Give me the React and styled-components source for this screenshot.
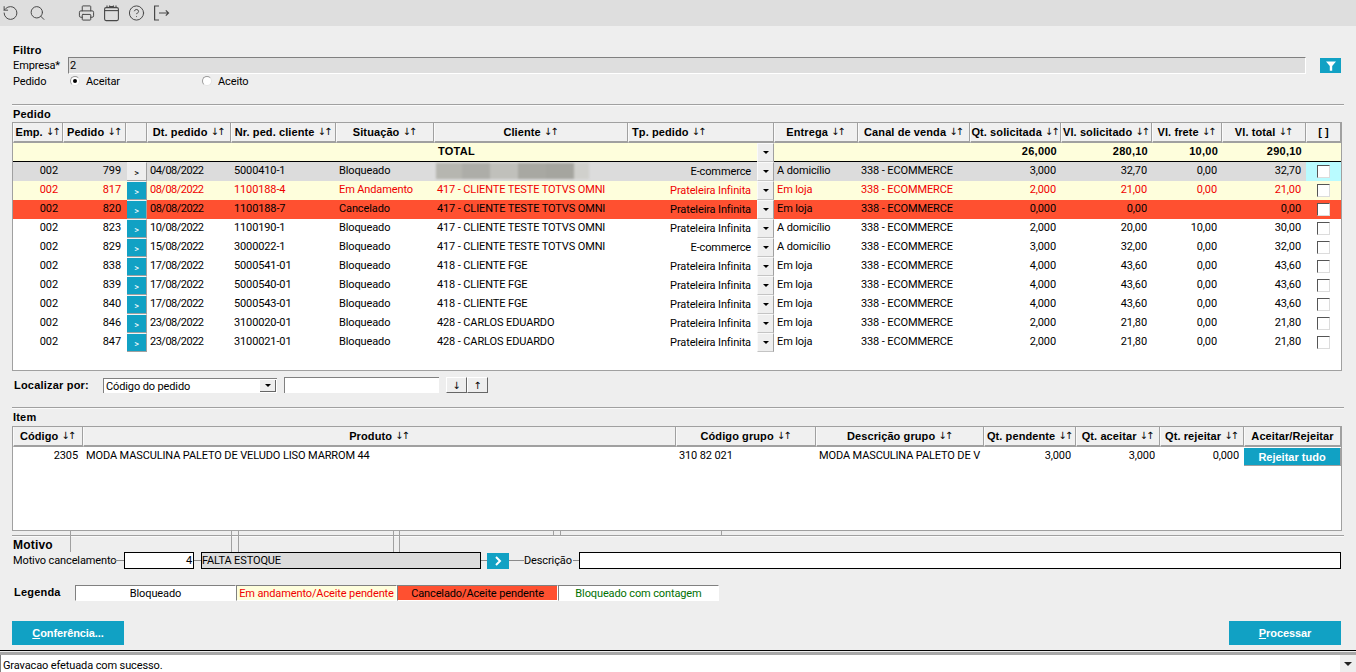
import React from "react";
import styled, { createGlobalStyle } from "styled-components";
import { RotateCcw, Search, Printer, CircleHelp } from "lucide-react";

const teal = "#11a1c4";
const line = "#a0a0a0";
const boldFont = `"Liberation Sans", Arial, sans-serif`;

const Global = createGlobalStyle`
  html, body {
    margin: 0;
    padding: 0;
    background: #eeeeee;
    overflow: hidden;
  }
  body {
    font-family: Roboto, "Liberation Sans", Arial, sans-serif;
    font-size: 11px;
    letter-spacing: -0.12px;
    color: #000;
  }
`;

const Page = styled.div`
  width: 1356px;
  height: 672px;
  display: flex;
  flex-direction: column;
  overflow: hidden;
`;

const Toolbar = styled.div`
  height: 26px;
  flex: none;
  background: #dedede;
  display: flex;
  align-items: center;
  padding-left: 2px;
  padding-bottom: 1px;
  box-sizing: border-box;
  color: #484848;
`;

const ToolIcon = styled.span`
  width: 17px;
  height: 17px;
  margin-right: ${(p) => p.$gap}px;
  display: flex;
  align-items: center;
  justify-content: center;
`;

const Main = styled.div`
  flex: none;
  width: 1332px;
  margin-left: 12px;
  display: flex;
  flex-direction: column;
`;

const Title = styled.div`
  height: ${(p) => p.$h}px;
  margin-top: ${(p) => p.$top || 0}px;
  padding: 0 0 ${(p) => p.$lift || 0}px 1px;
  box-sizing: border-box;
  display: flex;
  align-items: center;
  font-family: ${boldFont};
  font-weight: 700;
  font-size: ${(p) => p.$size || 11}px;
  letter-spacing: 0.2px;
`;

const FilterRow = styled.div`
  height: 17px;
  display: flex;
  align-items: center;
  padding-left: 1px;
`;

const FieldName = styled.span`
  width: 55px;
  flex: none;
`;

const ReadInput = styled.div`
  width: 1238px;
  height: 17px;
  box-sizing: border-box;
  background: #dedede;
  border-top: 1px solid #808080;
  border-left: 1px solid #808080;
  border-right: 1px solid #fff;
  border-bottom: 1px solid #fff;
  padding-left: 1px;
  line-height: 16px;
`;

const FilterButton = styled.div`
  width: 21px;
  height: 15px;
  margin-left: 14px;
  background: ${teal};
  display: flex;
  align-items: center;
  justify-content: center;
`;

const RadioRow = styled.div`
  height: 14px;
  display: flex;
  align-items: center;
  padding-left: 1px;
`;

const RadioName = styled(FieldName)`
  width: 57px;
`;

const RadioDot = styled.span`
  width: 10px;
  height: 10px;
  flex: none;
  box-sizing: border-box;
  border-radius: 50%;
  background: #fff;
  border: 1px solid #9a9a9a;
  border-bottom-color: #e4e4e4;
  border-right-color: #e4e4e4;
  display: flex;
  align-items: center;
  justify-content: center;
  &::after {
    content: "";
    width: 4px;
    height: 4px;
    border-radius: 50%;
    background: ${(p) => (p.$on ? "#000" : "transparent")};
  }
`;

const RadioLabel = styled.span`
  width: ${(p) => p.$w}px;
  margin-left: 6px;
`;

const Divider = styled.div`
  position: relative;
  height: 1px;
  margin-top: ${(p) => p.$top}px;
  background: ${line};
  border-bottom: 1px solid #fafafa;
`;

const Tick = styled.span`
  position: absolute;
  left: ${(p) => p.$x}px;
  top: -4px;
  width: 1px;
  height: ${(p) => (p.$tall ? 21 : 5)}px;
  background: ${line};
`;

const Table = styled.div`
  width: 1330px;
  height: ${(p) => p.$h}px;
  box-sizing: border-box;
  background: #fff;
  border: 1px solid ${line};
  overflow: hidden;
`;

const Row = styled.div`
  display: grid;
  grid-template-columns: ${(p) => p.$cols};
  height: ${(p) => p.$h || 19}px;
  background: ${(p) => p.$bg || "transparent"};
  color: ${(p) => p.$color || "#000"};
`;

const Head = styled.div`
  grid-column: span ${(p) => p.$span || 1};
  box-sizing: border-box;
  background: #f0f0f0;
  border-left: 1px solid #fafafa;
  border-right: 1px solid ${line};
  border-bottom: 2px solid ${line};
  display: flex;
  align-items: center;
  justify-content: ${(p) => (p.$span ? "flex-start" : "center")};
  font-family: ${boldFont};
  font-weight: 700;
  letter-spacing: 0.1px;
  padding: 0 0 1px ${(p) => (p.$span ? 3 : 0)}px;
  white-space: nowrap;
  overflow: hidden;
`;

const Cell = styled.div`
  box-sizing: border-box;
  padding: 0 5px 3px 3px;
  display: flex;
  align-items: center;
  justify-content: ${(p) => (p.$right ? "flex-end" : "flex-start")};
  white-space: nowrap;
  overflow: hidden;
  background: ${(p) => p.$bg || "transparent"};
`;

const DateCell = styled(Cell)`
  letter-spacing: -0.5px;
`;

const TotalCell = styled(Cell)`
  padding: 0 4px 2px 4px;
  font-family: ${boldFont};
  font-weight: 700;
  letter-spacing: 0.25px;
  border-bottom: 1px solid #000;
`;

const TypeCell = styled(Cell)`
  padding: 0 6px 1px 0;
`;

const RowButton = styled.div`
  box-sizing: border-box;
  margin-left: 1px;
  background: ${(p) => (p.$plain ? "#eeeeee" : teal)};
  color: ${(p) => (p.$plain ? "#000" : "#fff")};
  border-top: 1px solid #f4f4f4;
  border-right: 1px solid ${line};
  border-bottom: 1px solid ${line};
  display: flex;
  align-items: center;
  justify-content: center;
  font-size: 9px;
  padding-top: 3px;
`;

const ComboArrow = styled.div`
  box-sizing: border-box;
  background: #eeeeee;
  border-top: 1px solid #fafafa;
  border-left: 1px solid #fafafa;
  border-right: 1px solid ${line};
  border-bottom: 1px solid #c4c4c4;
  display: flex;
  align-items: center;
  justify-content: center;
  &::after {
    content: "";
    border-left: 3px solid transparent;
    border-right: 3px solid transparent;
    border-top: 3px solid #000;
  }
`;

const CheckCell = styled.div`
  display: flex;
  align-items: center;
  justify-content: center;
  background: ${(p) => p.$bg || "transparent"};
`;

const CheckBox = styled.span`
  width: 13px;
  height: 13px;
  box-sizing: border-box;
  background: #fff;
  border-top: 1px solid #555;
  border-left: 1px solid #555;
  border-right: 1px solid #dcdcdc;
  border-bottom: 1px solid #dcdcdc;
`;

const Redacted = styled.div`
  display: flex;
  height: 16px;
  margin: 2px 0 0 -1px;
  filter: blur(1px);
`;

const RedactedBit = styled.span`
  width: ${(p) => p.$w}px;
  background: ${(p) => p.$bg};
`;

const FindRow = styled.div`
  height: 16px;
  margin-top: 6px;
  display: flex;
  align-items: center;
`;

const FindLabel = styled.span`
  width: 91px;
  padding-left: 2px;
  box-sizing: border-box;
  font-family: ${boldFont};
  font-weight: 700;
  letter-spacing: 0.2px;
`;

const Combo = styled.div`
  width: 174px;
  height: 15px;
  margin-top: 1px;
  box-sizing: border-box;
  background: #fff;
  border-top: 1px solid #808080;
  border-left: 1px solid #808080;
  display: flex;
  align-items: center;
  justify-content: space-between;
  padding-left: 2px;
`;

const ComboButton = styled.span`
  width: 16px;
  height: 12px;
  margin-right: 1px;
  box-sizing: border-box;
  background: #eeeeee;
  border-right: 1px solid #666;
  border-bottom: 1px solid #666;
  display: flex;
  align-items: center;
  justify-content: center;
  &::after {
    content: "";
    border-left: 3px solid transparent;
    border-right: 3px solid transparent;
    border-top: 3px solid #000;
  }
`;

const FindInput = styled.div`
  width: 155px;
  height: 16px;
  margin-left: 7px;
  box-sizing: border-box;
  background: #fff;
  border-top: 1px solid #808080;
  border-left: 1px solid #808080;
`;

const FindButton = styled.div`
  width: 21px;
  height: 16px;
  box-sizing: border-box;
  margin-left: ${(p) => p.$left}px;
  background: #eeeeee;
  border-top: 1px solid #fff;
  border-left: 1px solid #fff;
  border-right: 1px solid #666;
  border-bottom: 1px solid #666;
  display: flex;
  align-items: center;
  justify-content: center;
  font-family: "DejaVu Sans", sans-serif;
  font-size: 10px;
`;

const RejectButton = styled.div`
  box-sizing: border-box;
  height: 18px;
  margin-top: 1px;
  background: ${teal};
  color: #fff;
  border-right: 1px solid ${line};
  border-bottom: 1px solid ${line};
  display: flex;
  align-items: center;
  justify-content: center;
  font-family: ${boldFont};
  font-weight: 700;
  letter-spacing: 0;
`;

const ReasonRow = styled.div`
  height: 17px;
  display: flex;
  align-items: center;
  padding-left: 1px;
`;

const ReasonLabel = styled.span`
  width: ${(p) => p.$w}px;
  flex: none;
  white-space: nowrap;
`;

const Joint = styled.span`
  width: ${(p) => p.$w}px;
  height: 1px;
  flex: none;
  background: #8a8a8a;
`;

const BoxInput = styled.div`
  width: ${(p) => p.$w}px;
  height: 17px;
  flex: none;
  box-sizing: border-box;
  border: 1px solid #000;
  background: ${(p) => (p.$gray ? "#dcdcdc" : "#fff")};
  text-align: ${(p) => (p.$right ? "right" : "left")};
  padding: 0 1px 0 0;
  line-height: 16px;
`;

const ArrowButton = styled.div`
  width: 22px;
  height: 16px;
  flex: none;
  background: ${teal};
  display: flex;
  align-items: center;
  justify-content: center;
`;

const LegendRow = styled.div`
  height: 16px;
  margin-top: 16px;
  display: flex;
  align-items: center;
`;

const LegendLabel = styled.span`
  width: 63px;
  padding: 0 0 2px 2px;
  box-sizing: border-box;
  font-family: ${boldFont};
  font-weight: 700;
  letter-spacing: 0.2px;
`;

const LegendCell = styled.div`
  width: 161px;
  height: 16px;
  box-sizing: border-box;
  background: ${(p) => p.$bg};
  color: ${(p) => p.$color};
  border-top: 1px solid #808080;
  border-left: 1px solid #808080;
  border-right: 1px solid #fff;
  border-bottom: 1px solid #fff;
  display: flex;
  align-items: center;
  justify-content: center;
`;

const ActionRow = styled.div`
  width: 1329px;
  height: 24px;
  margin-top: 20px;
  display: flex;
  justify-content: space-between;
`;

const ActionButton = styled.div`
  width: 112px;
  height: 24px;
  background: ${teal};
  color: #fff;
  display: flex;
  align-items: center;
  justify-content: center;
  font-family: ${boldFont};
  font-weight: 700;
  letter-spacing: -0.1px;
  u {
    text-underline-offset: 1px;
  }
`;

const StatusBar = styled.div`
  margin-top: 5px;
  flex: 1;
  background: #fff;
  border-top: 1px solid #000;
  display: flex;
  flex-direction: column;
`;

const StatusEdge = styled.div`
  height: 4px;
  flex: none;
  background: #a8a8a8;
  border-top: 1px solid #eeeeee;
  box-sizing: border-box;
`;

const StatusBody = styled.div`
  flex: 1;
  display: flex;
  align-items: center;
  justify-content: space-between;
  border-left: 1px solid #808080;
  padding-left: 2px;
`;

const StatusText = styled.span`
  padding-top: 3px;
`;

const StatusArrow = styled.div`
  width: 16px;
  align-self: stretch;
  background: #eeeeee;
  display: flex;
  align-items: center;
  justify-content: center;
  &::after {
    content: "";
    border-left: 4px solid transparent;
    border-right: 4px solid transparent;
    border-top: 4px solid #222;
  }
`;

const Sort = styled.span`
  font-family: "DejaVu Sans", sans-serif;
  font-weight: 400;
  font-size: 10px;
  letter-spacing: -2px;
  margin-left: 3px;
  margin-right: 2px;
`;

const CalendarIcon = () => (
  <svg width="17" height="18" viewBox="0 0 17 18" fill="none" stroke="currentColor" strokeWidth="1.1">
    <rect x="1.6" y="3.6" width="13.8" height="13" rx="1.5" />
    <path d="M1.6 6.6h13.8" />
    <path d="M4 1.5v2.5M13 1.5v2.5M6 2.6h5M6 2.6l1-1M11 2.6l-1-1" />
  </svg>
);

const ExitIcon = () => (
  <svg width="17" height="18" viewBox="0 0 17 18" fill="none" stroke="currentColor" strokeWidth="1.2">
    <path d="M6 2H1.6v14H6" />
    <path d="M6 9h9.5M12.8 6.4L15.5 9l-2.7 2.6" />
  </svg>
);

const FunnelIcon = () => (
  <svg width="10" height="10" viewBox="0 0 10 10" fill="#fff">
    <path d="M0 0.5h10L6.2 5v4.8H3.8V5z" />
  </svg>
);

const ChevronIcon = () => (
  <svg width="8" height="10" viewBox="0 0 8 10" fill="none" stroke="#fff" strokeWidth="2">
    <path d="M2 1l4 4-4 4" />
  </svg>
);

const orderCols = "50px 63px 21px 84px 105px 98px 194px 129px 17px 84px 112px 91px 91px 70px 84px 35px";
const itemCols = "70px 593px 140px 168px 92px 84px 84px 97px";

const RED = { bg: "#fefedc", color: "#f00000" };
const ORANGE = { bg: "#ff5030", color: "#000" };
const GRAY = { bg: "#dcdcdc", color: "#000" };

const omni = "417 - CLIENTE TESTE TOTVS OMNI";
const fge = "418 - CLIENTE FGE";
const carlos = "428 - CARLOS EDUARDO";
const shelf = "Prateleira Infinita";

const orders = [
  { n: "799", d: "04/08/2022", c: "5000410-1", s: "Bloqueado", cl: null, t: "E-commerce", e: "A domicílio", q: "3,000", v: "32,70", f: "0,00", tot: "32,70", ...GRAY, plain: true, check: "#b9fbff" },
  { n: "817", d: "08/08/2022", c: "1100188-4", s: "Em Andamento", cl: omni, t: shelf, e: "Em loja", q: "2,000", v: "21,00", f: "0,00", tot: "21,00", ...RED },
  { n: "820", d: "08/08/2022", c: "1100188-7", s: "Cancelado", cl: omni, t: shelf, e: "Em loja", q: "0,000", v: "0,00", f: "", tot: "0,00", ...ORANGE },
  { n: "823", d: "10/08/2022", c: "1100190-1", s: "Bloqueado", cl: omni, t: shelf, e: "A domicílio", q: "2,000", v: "20,00", f: "10,00", tot: "30,00" },
  { n: "829", d: "15/08/2022", c: "3000022-1", s: "Bloqueado", cl: omni, t: "E-commerce", e: "A domicílio", q: "3,000", v: "32,00", f: "0,00", tot: "32,00" },
  { n: "838", d: "17/08/2022", c: "5000541-01", s: "Bloqueado", cl: fge, t: shelf, e: "Em loja", q: "4,000", v: "43,60", f: "0,00", tot: "43,60" },
  { n: "839", d: "17/08/2022", c: "5000540-01", s: "Bloqueado", cl: fge, t: shelf, e: "Em loja", q: "4,000", v: "43,60", f: "0,00", tot: "43,60" },
  { n: "840", d: "17/08/2022", c: "5000543-01", s: "Bloqueado", cl: fge, t: shelf, e: "Em loja", q: "4,000", v: "43,60", f: "0,00", tot: "43,60" },
  { n: "846", d: "23/08/2022", c: "3100020-01", s: "Bloqueado", cl: carlos, t: shelf, e: "Em loja", q: "2,000", v: "21,80", f: "0,00", tot: "21,80" },
  { n: "847", d: "23/08/2022", c: "3100021-01", s: "Bloqueado", cl: carlos, t: shelf, e: "Em loja", q: "2,000", v: "21,80", f: "0,00", tot: "21,80" },
];

const blurBits = [
  [26, "#b6b6b0"],
  [28, "#adada8"],
  [28, "#c0c0bb"],
  [28, "#a8a8a2"],
  [28, "#a5a59f"],
  [15, "#d0d0cc"],
];

const orderHeads = [
  ["Emp."], ["Pedido"], [""], ["Dt. pedido"], ["Nr. ped. cliente"], ["Situação"],
  ["Cliente"], ["Tp. pedido", 2], ["Entrega"], ["Canal de venda"], ["Qt. solicitada"],
  ["Vl. solicitado"], ["Vl. frete"], ["Vl. total"],
];

const itemHeads = [
  "Código", "Produto", "Código grupo", "Descrição grupo", "Qt. pendente", "Qt. aceitar", "Qt. rejeitar",
];

const ticks = [
  [58, true], [219, true], [226, true], [381, true], [387, true], [541, false], [548, false], [709, false],
];

export default function App() {
  return (
    <Page>
      <Global />
      <Toolbar>
        <ToolIcon $gap={10}><RotateCcw size={18} strokeWidth={1.4} /></ToolIcon>
        <ToolIcon $gap={32}><Search size={18} strokeWidth={1.4} /></ToolIcon>
        <ToolIcon $gap={8}><Printer size={18} strokeWidth={1.4} /></ToolIcon>
        <ToolIcon $gap={8}><CalendarIcon /></ToolIcon>
        <ToolIcon $gap={8}><CircleHelp size={18} strokeWidth={1.4} /></ToolIcon>
        <ToolIcon $gap={0}><ExitIcon /></ToolIcon>
      </Toolbar>
      <Main>
        <Title $h={14} $top={17} $lift={1}>Filtro</Title>
        <FilterRow>
          <FieldName>Empresa*</FieldName>
          <ReadInput>2</ReadInput>
          <FilterButton><FunnelIcon /></FilterButton>
        </FilterRow>
        <RadioRow>
          <RadioName>Pedido</RadioName>
          <RadioDot $on />
          <RadioLabel $w={116}>Aceitar</RadioLabel>
          <RadioDot />
          <RadioLabel $w={60}>Aceito</RadioLabel>
        </RadioRow>
        <Divider $top={16} />
        <Title $h={15} $top={1} $lift={2}>Pedido</Title>
        <Table $h={249}>
          <Row $cols={orderCols} $h={20}>
            {orderHeads.map(([label, span], i) => (
              <Head key={i} $span={span}>
                {label}
                {label && <Sort>↓↑</Sort>}
              </Head>
            ))}
            <Head>[ ]</Head>
          </Row>
          <Row $cols={orderCols} $bg="#fefedc">
            {Array.from({ length: 6 }).map((_, i) => <TotalCell key={i} />)}
            <TotalCell>TOTAL</TotalCell>
            <TotalCell />
            <ComboArrow />
            <TotalCell />
            <TotalCell />
            <TotalCell $right>26,000</TotalCell>
            <TotalCell $right>280,10</TotalCell>
            <TotalCell $right>10,00</TotalCell>
            <TotalCell $right>290,10</TotalCell>
            <TotalCell />
          </Row>
          {orders.map((o) => (
            <Row key={o.n} $cols={orderCols} $bg={o.bg} $color={o.color}>
              <Cell $right>002</Cell>
              <Cell $right>{o.n}</Cell>
              <RowButton $plain={o.plain}>&gt;</RowButton>
              <DateCell>{o.d}</DateCell>
              <Cell>{o.c}</Cell>
              <Cell>{o.s}</Cell>
              <Cell>
                {o.cl || (
                  <Redacted>
                    {blurBits.map(([w, c], i) => <RedactedBit key={i} $w={w} $bg={c} />)}
                  </Redacted>
                )}
              </Cell>
              <TypeCell $right>{o.t}</TypeCell>
              <ComboArrow />
              <Cell>{o.e}</Cell>
              <Cell>338 - ECOMMERCE</Cell>
              <Cell $right>{o.q}</Cell>
              <Cell $right>{o.v}</Cell>
              <Cell $right>{o.f}</Cell>
              <Cell $right>{o.tot}</Cell>
              <CheckCell $bg={o.check}><CheckBox /></CheckCell>
            </Row>
          ))}
        </Table>
        <FindRow>
          <FindLabel>Localizar por:</FindLabel>
          <Combo>
            Código do pedido
            <ComboButton />
          </Combo>
          <FindInput />
          <FindButton $left={7}>↓</FindButton>
          <FindButton $left={0}>↑</FindButton>
        </FindRow>
        <Divider $top={14} />
        <Title $h={17} $lift={2}>Item</Title>
        <Table $h={105}>
          <Row $cols={itemCols} $h={20}>
            {itemHeads.map((label) => (
              <Head key={label}>
                {label}
                <Sort>↓↑</Sort>
              </Head>
            ))}
            <Head>Aceitar/Rejeitar</Head>
          </Row>
          <Row $cols={itemCols}>
            <Cell $right>2305</Cell>
            <Cell>MODA MASCULINA PALETO DE VELUDO LISO MARROM 44</Cell>
            <Cell>310 82 021</Cell>
            <Cell>MODA MASCULINA PALETO DE V</Cell>
            <Cell $right>3,000</Cell>
            <Cell $right>3,000</Cell>
            <Cell $right>0,000</Cell>
            <RejectButton>Rejeitar tudo</RejectButton>
          </Row>
        </Table>
        <Divider $top={4}>
          {ticks.map(([x, tall]) => <Tick key={x} $x={x} $tall={tall} />)}
        </Divider>
        <Title $h={15} $size={12}>Motivo</Title>
        <ReasonRow>
          <ReasonLabel $w={102}>Motivo cancelamento</ReasonLabel>
          <Joint $w={9} />
          <BoxInput $w={70} $right>4</BoxInput>
          <Joint $w={7} />
          <BoxInput $w={280} $gray>FALTA ESTOQUE</BoxInput>
          <Joint $w={6} />
          <ArrowButton><ChevronIcon /></ArrowButton>
          <Joint $w={15} />
          <ReasonLabel $w={49}>Descrição</ReasonLabel>
          <Joint $w={6} />
          <BoxInput $w={762} />
        </ReasonRow>
        <LegendRow>
          <LegendLabel>Legenda</LegendLabel>
          <LegendCell $bg="#fff" $color="#000">Bloqueado</LegendCell>
          <LegendCell $bg="#fefedc" $color="#f00000">Em andamento/Aceite pendente</LegendCell>
          <LegendCell $bg="#ff5030" $color="#000">Cancelado/Aceite pendente</LegendCell>
          <LegendCell $bg="#fff" $color="#007000">Bloqueado com contagem</LegendCell>
        </LegendRow>
        <ActionRow>
          <ActionButton><span><u>C</u>onferência...</span></ActionButton>
          <ActionButton><span><u>P</u>rocessar</span></ActionButton>
        </ActionRow>
      </Main>
      <StatusBar>
        <StatusEdge />
        <StatusBody>
          <StatusText>Gravacao efetuada com sucesso.</StatusText>
          <StatusArrow />
        </StatusBody>
      </StatusBar>
    </Page>
  );
}
